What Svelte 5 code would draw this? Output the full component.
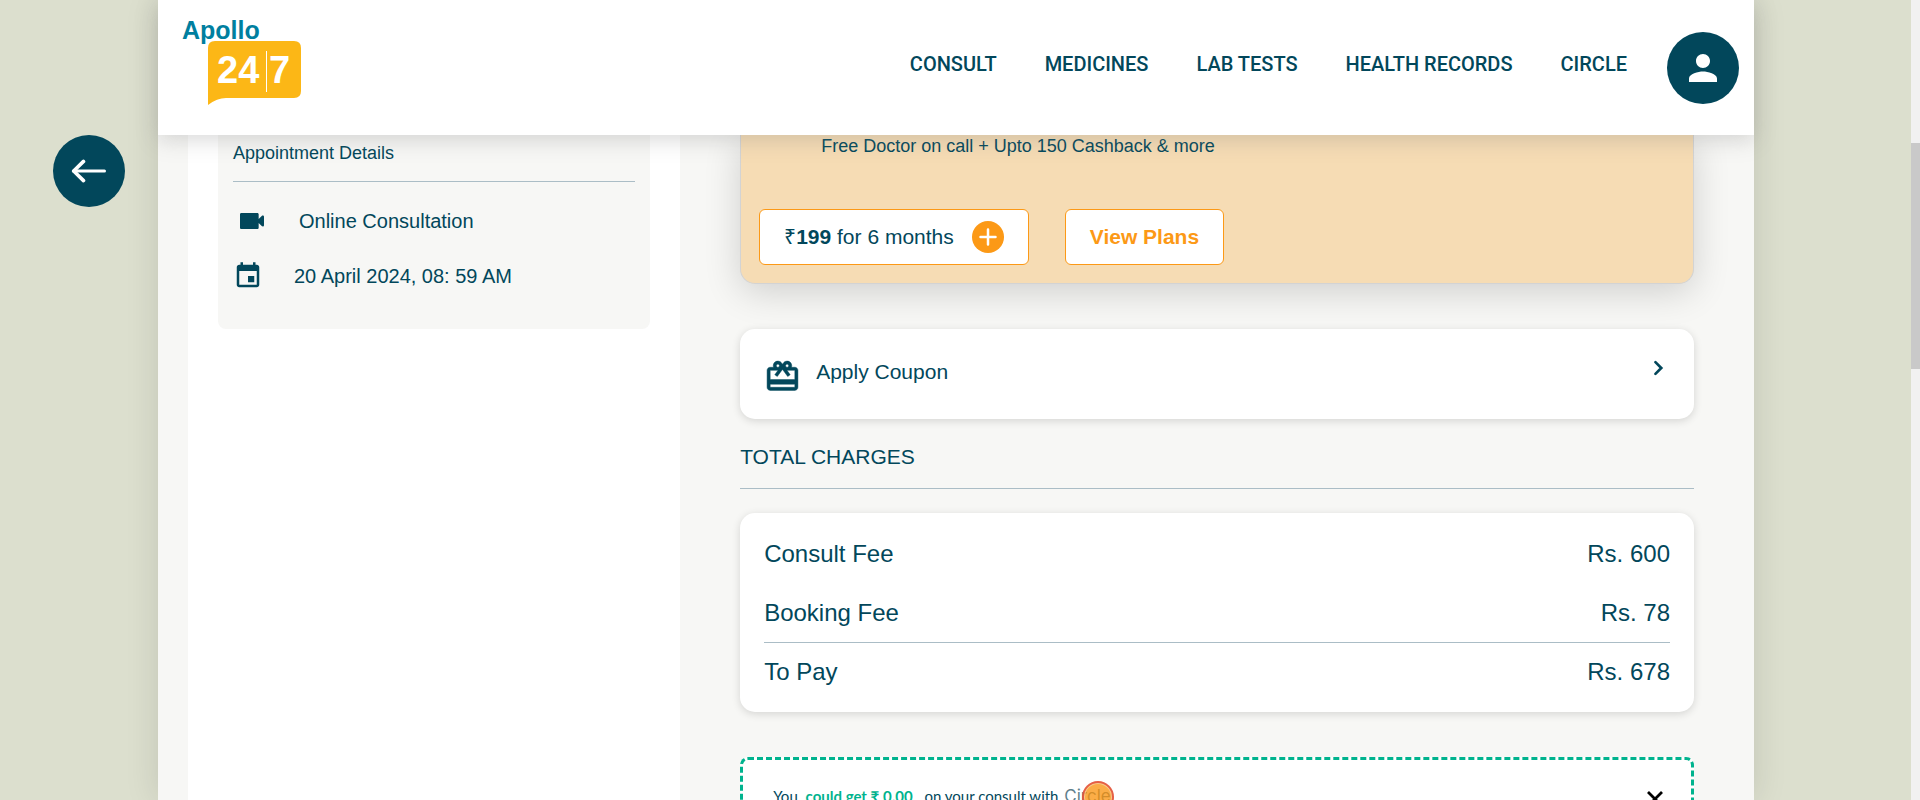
<script>
  const links = ['CONSULT', 'MEDICINES', 'LAB TESTS', 'HEALTH RECORDS', 'CIRCLE'];
  const fees = [
    { label: 'Consult Fee', amount: 'Rs. 600' },
    { label: 'Booking Fee', amount: 'Rs. 78' }
  ];
  const total = { label: 'To Pay', amount: 'Rs. 678' };
</script>

<div class="page">
  <div class="gutter">
    <button class="back" aria-label="Go back">
      <svg width="36" height="24" viewBox="0 0 36 24" fill="none" stroke="#fff" stroke-width="3" stroke-linecap="round" stroke-linejoin="round">
        <path d="M33.500 12H2.500" /><path d="M12.500 2.400L2.700 12l9.800 9.600" stroke-width="3.600" />
      </svg>
    </button>
  </div>

  <div class="shell">
    <header>
      <a class="logo" href="#home" aria-label="Apollo 24|7">
        <svg width="122" height="94" viewBox="0 0 122 94">
          <text x="0" y="24" class="brand">Apollo</text>
          <path d="M26 33q0-7 7-7h79q7 0 7 7v43q0 7-7 7H44q-9 0-18 7z" fill="#fcb716" />
          <text x="35" y="68" class="hours">24</text>
          <path d="M84.500 36v41" stroke="#fff" stroke-width="1" />
          <text x="87" y="68" class="hours">7</text>
        </svg>
      </a>
      <nav>
        {#each links as link}
          <a href="#{link.toLowerCase().replace(' ', '-')}">{link}</a>
        {/each}
      </nav>
      <button class="avatar" aria-label="Account">
        <svg width="42" height="42" viewBox="0 0 24 24" fill="#fff">
          <path d="M12 12c2.210 0 4-1.790 4-4s-1.790-4-4-4-4 1.790-4 4 1.790 4 4 4zm0 2c-2.670 0-8 1.340-8 4v2h16v-2c0-2.660-5.330-4-8-4z" />
        </svg>
      </button>
    </header>

    <main>
      <aside class="details">
        <section class="appointment">
          <h2>Appointment Details</h2>
          <div class="line">
            <svg class="video" width="32" height="32" viewBox="0 0 24 24"><path d="M17 10.500V7c0-.55-.45-1-1-1H4c-.55 0-1 .45-1 1v10c0 .55.45 1 1 1h12c.55 0 1-.45 1-1v-3.500l2.300 2.300c.7.600 1.700.300 1.700-.7V8.900c0-1-1-1.300-1.700-.7z" /></svg>
            <span>Online Consultation</span>
          </div>
          <div class="line">
            <svg width="30" height="30" viewBox="0 0 24 24"><path d="M17 12h-5v5h5v-5zM16 1v2H8V1H6v2H5c-1.110 0-1.990.9-1.990 2L3 19c0 1.100.89 2 2 2h14c1.100 0 2-.9 2-2V5c0-1.100-.9-2-2-2h-1V1h-2zm3 18H5V8h14v11z" /></svg>
            <span>20 April 2024, 08: 59 AM</span>
          </div>
        </section>
      </aside>

      <div class="payment">
        <section class="plan">
          <p>Free Doctor on call + Upto 150 Cashback &amp; more</p>
          <div class="actions">
            <button class="price">
              <span>₹<b>199</b> for 6 months</span>
              <svg width="32" height="32" viewBox="0 0 32 32"><circle cx="16" cy="16" r="16" fill="#fc9916" /><path d="M16 8.500v15M8.500 16h15" stroke="#fff" stroke-width="2.500" stroke-linecap="round" /></svg>
            </button>
            <button class="view">View Plans</button>
          </div>
        </section>

        <button class="coupon">
          <svg class="gift" width="37" height="37" viewBox="0 0 24 24"><path d="M20 6h-2.180c.11-.31.18-.65.18-1 0-1.660-1.340-3-3-3-1.050 0-1.960.54-2.500 1.350l-.5.67-.5-.68C10.960 2.540 10.050 2 9 2 7.340 2 6 3.340 6 5c0 .35.07.69.18 1H4c-1.110 0-1.990.89-1.990 2L2 19c0 1.110.89 2 2 2h16c1.110 0 2-.89 2-2V8c0-1.110-.89-2-2-2zm-5-2c.55 0 1 .45 1 1s-.45 1-1 1-1-.45-1-1 .45-1 1-1zM9 4c.55 0 1 .45 1 1s-.45 1-1 1-1-.45-1-1 .45-1 1-1zm11 15H4v-2h16v2zm0-5H4V8h5.080L7 10.830 8.620 12 11 8.760l1-1.360 1 1.360L15.380 12 17 10.830 14.920 8H20v6z" stroke="#02475b" stroke-width=".3" /></svg>
          <span>Apply Coupon</span>
          <svg width="28" height="28" viewBox="0 0 24 24"><path d="M9.800 7l5 5-5 5" fill="none" stroke="#02475b" stroke-width="2.300" stroke-linecap="round" /></svg>
        </button>

        <h2 class="heading">TOTAL CHARGES</h2>
        <table class="charges">
          <tbody>
            {#each fees as fee}
              <tr><th scope="row">{fee.label}</th><td>{fee.amount}</td></tr>
            {/each}
          </tbody>
          <tfoot>
            <tr><th scope="row">{total.label}</th><td>{total.amount}</td></tr>
          </tfoot>
        </table>

        <section class="savings">
          <p>
            You <b>could get ₹ 0.00</b> on your consult with
            <span class="circle">Circle<i class="pointer"></i></span>
          </p>
          <button class="close" aria-label="Close">
            <svg width="28" height="28" viewBox="0 0 24 24"><path d="M6 6l12 12M18 6L6 18" stroke="#000" stroke-width="2.400" /></svg>
          </button>
        </section>
      </div>
    </main>
  </div>

  <div class="gutter"></div>
  <div class="track"><div class="thumb"></div></div>
</div>

<style>
  :global(body) { margin: 0; overflow: hidden; }
  * { box-sizing: border-box; }
  .page {
    display: grid;
    grid-template-columns: 158px minmax(0, 1fr) 157px 9px;
    height: 100vh;
    overflow: hidden;
    background: #dcdfce;
    color: #02475b;
    font-family: "Liberation Sans", Arial, sans-serif;
  }
  h2, p { margin: 0; font-weight: 400; }
  svg { display: block; flex: none; fill: #02475b; }
  button { font: inherit; color: inherit; border: 0; padding: 0; cursor: pointer; }
  .gutter { display: flex; justify-content: flex-end; padding: 135px 33px 0 0; }
  .back, .avatar {
    display: flex;
    align-items: center;
    justify-content: center;
    flex: none;
    width: 72px;
    height: 72px;
    border-radius: 50%;
    background: #02475b;
  }
  .back svg { fill: none; }
  .avatar svg { fill: #fff; }
  .shell {
    display: flex;
    flex-direction: column;
    height: 100vh;
    background: #f7f7f5;
    box-shadow: 0 0 32px rgba(0, 0, 0, 0.12);
  }
  header {
    position: relative;
    z-index: 1;
    display: flex;
    align-items: center;
    flex: none;
    height: 135px;
    padding: 0 15px 0 24px;
    background: #fff;
    box-shadow: 0 5px 20px rgba(128, 128, 128, 0.3);
  }
  .logo { padding-bottom: 11px; }
  .brand { font-size: 25px; font-weight: 700; fill: #007f9f; }
  .hours { font-size: 38px; font-weight: 700; fill: #fff; }
  nav { display: flex; gap: 48px; margin: 0 40px 7px auto; }
  nav a {
    color: #02475b;
    font: 500 20px/24px Roboto, "Open Sans", sans-serif;
    text-decoration: none;
    white-space: nowrap;
  }
  main {
    display: grid;
    grid-template-columns: minmax(0, 11fr) minmax(0, 24fr);
    flex: 1;
    min-height: 0;
    overflow: hidden;
    padding-left: 30px;
  }
  .details { padding: 0 30px; background: #fff; }
  .appointment {
    display: flex;
    flex-direction: column;
    gap: 23px;
    padding: 8px 15px 37px;
    border-radius: 0 0 8px 8px;
    background: #f7f7f5;
  }
  .appointment h2 {
    padding-bottom: 18px;
    border-bottom: 1px solid #abbdc6;
    font-size: 18px;
    line-height: 20px;
  }
  .line { display: flex; align-items: center; gap: 31px; height: 32px; font-size: 20px; line-height: 24px; }
  .video { margin-left: 3px; }
  .payment { padding: 0 60px; }
  .plan {
    padding: 0 18px 18px;
    border: 1px solid #d3d3d3;
    border-top: 0;
    border-radius: 0 0 15px 15px;
    background: #f6dcb4;
    box-shadow: 0 8px 36px rgba(0, 0, 0, 0.16);
  }
  .plan p { padding-left: 62px; margin-bottom: 52px; font-size: 18px; line-height: 22px; }
  .actions { display: flex; gap: 36px; }
  .price, .view {
    display: flex;
    align-items: center;
    gap: 18px;
    height: 56px;
    padding: 0 24px;
    border: 1px solid #fc9916;
    border-radius: 6px;
    background: #fff;
    font-size: 21px;
    line-height: 24px;
    white-space: nowrap;
  }
  .view { color: #fc9916; font-weight: 700; }
  .coupon {
    display: flex;
    align-items: flex-start;
    width: 100%;
    height: 90px;
    margin-top: 45px;
    padding: 25px 22px 0 24px;
    border-radius: 15px;
    background: #fff;
    box-shadow: 0 2px 8px rgba(0, 0, 0, 0.14);
    font-size: 21px;
    line-height: 36px;
    text-align: left;
  }
  .coupon span { flex: 1; padding-left: 15px; }
  .gift { margin-top: 4px; }
  .heading {
    margin: 26px 0 24px;
    padding-bottom: 19px;
    border-bottom: 1px solid #abbdc6;
    font-size: 21px;
    line-height: 24px;
  }
  .charges {
    width: 100%;
    padding: 11px 24px;
    border-spacing: 0;
    border-radius: 15px;
    background: #fff;
    box-shadow: 0 2px 8px rgba(0, 0, 0, 0.14);
    font-size: 24px;
    line-height: 28px;
  }
  th, td { height: 59px; padding: 0; font-weight: 400; text-align: left; }
  td { text-align: right; }
  tfoot th, tfoot td { border-top: 1px solid #abbdc6; }
  .savings {
    display: flex;
    align-items: flex-start;
    justify-content: space-between;
    margin-top: 45px;
    padding: 22px 22px 24px 30px;
    border: 3px dashed #00b38e;
    border-radius: 8px;
    background: #fff;
  }
  .savings p { font: 400 15px/28px Lato, "Liberation Sans", sans-serif; white-space: nowrap; }
  .savings b { margin: 0 8px 0 4px; color: #00b38e; }
  .circle { position: relative; margin-left: 2px; color: #5f7f8c; font-family: Inter, sans-serif; font-size: 17px; }
  .pointer {
    position: absolute;
    top: -5px;
    right: -3px;
    width: 32px;
    height: 32px;
    border: 2px solid rgba(222, 70, 70, 0.75);
    border-radius: 50%;
    background: rgba(250, 145, 10, 0.75);
    box-shadow: inset 0 0 0 1px #f7c98e;
  }
  .close { padding-top: 3px; background: none; }
  .track { padding-top: 143px; background: #f1f1f1; }
  .thumb { height: 226px; background: #c9c9c9; }
</style>
